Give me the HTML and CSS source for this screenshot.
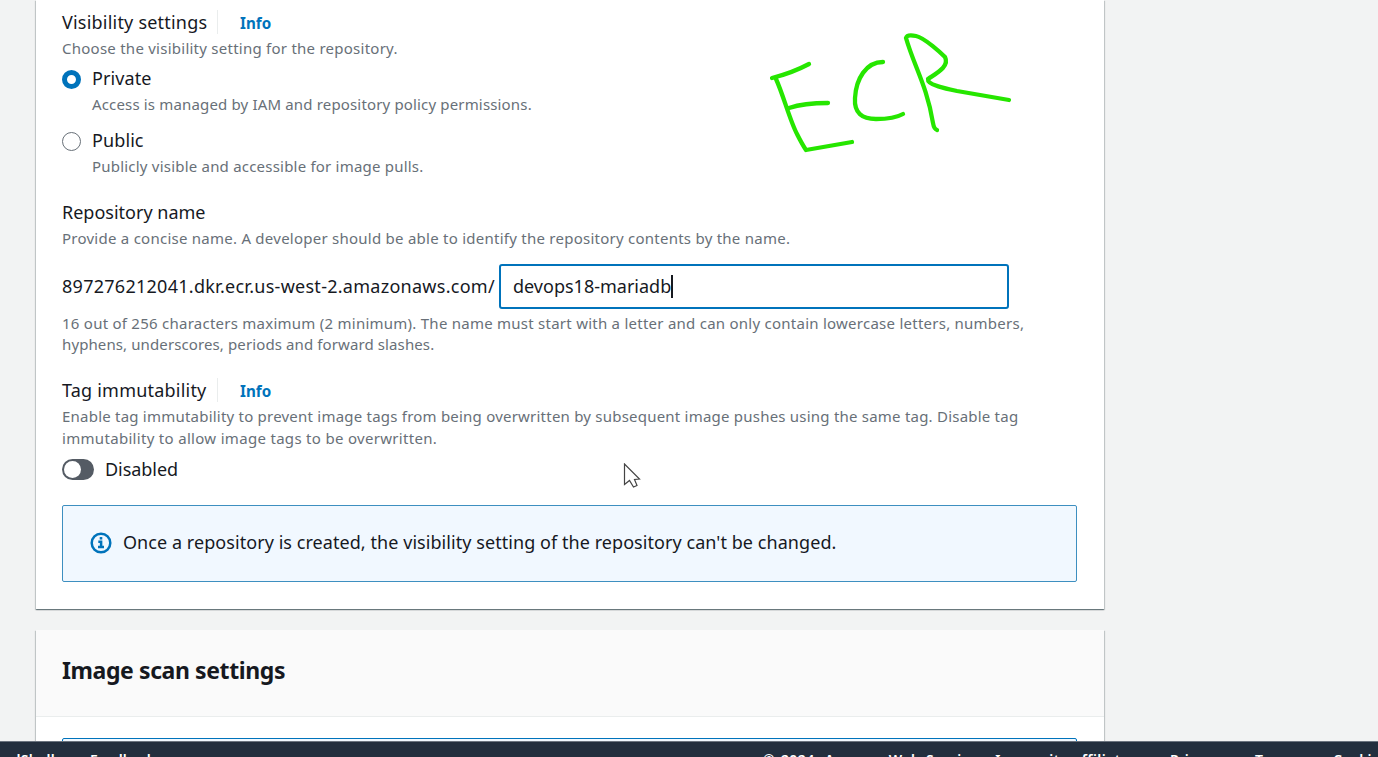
FILE: index.html
```html
<!DOCTYPE html>
<html lang="en">
<head>
<meta charset="utf-8">
<title>Create repository</title>
<link rel="stylesheet" href="styles.css">
</head>
<body>
<main class="content">
  <section class="card settings">
    <div class="field-title"><span class="label label-visibility">Visibility settings</span><a class="info">Info</a></div>
    <p class="hint h-choose">Choose the visibility setting for the repository.</p>
    <div class="option option-first">
      <span class="radio radio-on"></span>
      <div><div class="option-label">Private</div><p class="hint option-hint h-access">Access is managed by IAM and repository policy permissions.</p></div>
    </div>
    <div class="option">
      <span class="radio"></span>
      <div><div class="option-label">Public</div><p class="hint option-hint h-public">Publicly visible and accessible for image pulls.</p></div>
    </div>
    <div class="field-title title-repo"><span class="label-plain">Repository name</span></div>
    <p class="hint h-provide">Provide a concise name. A developer should be able to identify the repository contents by the name.</p>
    <div class="name-row">
      <span class="prefix">897276212041.dkr.ecr.us-west-2.amazonaws.com/</span>
      <div class="name-input"><span>devops18-mariadb</span><i class="caret"></i></div>
    </div>
    <p class="hint name-hint">16 out of 256 characters maximum (2 minimum). The name must start with a letter and can only contain lowercase letters, numbers,<br><span class="h-hyphens">hyphens, underscores, periods and forward slashes.</span></p>
    <div class="field-title title-tag"><span class="label label-tag">Tag immutability</span><a class="info">Info</a></div>
    <p class="hint tag-hint">Enable tag immutability to prevent image tags from being overwritten by subsequent image pushes using the same tag. Disable tag<br><span class="h-immut">immutability to allow image tags to be overwritten.</span></p>
    <div class="toggle-row"><span class="toggle"></span><span class="toggle-label">Disabled</span></div>
    <div class="alert">
      <svg class="info-icon" width="22" height="22" viewBox="0 0 22 22"><circle cx="11" cy="11" r="9.3"/><path d="M8.3 9.7h2.8v5.2M8 15.1h6"/><path d="M9.7 6.3h2.6"/></svg>
      <span class="alert-text">Once a repository is created, the visibility setting of the repository can't be changed.</span>
    </div>
  </section>
  <section class="card scan">
    <header class="card-header"><h2>Image scan settings</h2></header>
    <div class="scan-body"><div class="scan-alert"></div></div>
  </section>
</main>
<footer class="footer">
  <div class="footer-left"><span class="cloudshell">CloudShell</span><span>Feedback</span></div>
  <div class="footer-right"><span class="copyright">© 2024, Amazon Web Services, Inc. or its affiliates.</span><span class="privacy">Privacy</span><span class="terms">Terms</span><span>Cookie preferences</span></div>
</footer>
<svg class="ink" width="260" height="140" viewBox="760 25 260 140">
  <path d="M809 64Q792 73 772 78M776 79C783 94 790 121 797 134Q802 144 806 150L852 142M789 108Q804 103 828 103"/>
  <path d="M883 62C866 62 856 79 855 98C854 113 862 119 876 119C889 119 896 118 903 114"/>
  <path d="M937 130Q934 129 933 123C927 86 914 66 906 38Q907 34 916 36C925 38 942 54 945 57C950 67 935 74 928 79C927 85 947 89 957 91L1009 100"/>
</svg>
<svg class="pointer" width="18" height="28" viewBox="0 0 18 28"><path d="M1.5 1v20.500l5-4 4 6.500 3.500-1.500-2.500-6 5-.5z"/></svg>
</body>
</html>
```
FILE: styles.css
```css
* { box-sizing: border-box; }
body {
  margin: 0;
  height: 757px;
  overflow: hidden;
  position: relative;
  display: flex;
  flex-direction: column;
  background: #f2f3f3;
  color: #16191f;
  font: 18px/26px "Noto Sans", "Open Sans", sans-serif;
}
p, h2 { margin: 0; }
.content { flex: 1; min-height: 0; overflow: hidden; padding: 0 274px 0 35.5px; }
.card {
  background: #fff;
  box-shadow: 0 1px 1px rgba(0, 28, 36, .4), 1px 1px 1px rgba(0, 28, 36, .15), -1px 1px 1px rgba(0, 28, 36, .15);
}
.settings { height: 609px; padding: 8px 27px 27px 26.5px; }
.field-title { display: flex; align-items: center; height: 28px; }
.label {
  height: 24px;
  line-height: 24px;
  width: 156px;
  border-right: 1px solid #eaeded;
  letter-spacing: .21px;
  white-space: nowrap;
}
.info { margin-left: 22px; padding-top: 1px; color: #0073bb; font-size: 15.2px; font-weight: 700; }
.hint { color: #687078; font-size: 15px; line-height: 21.3px; letter-spacing: .25px; white-space: nowrap; margin-top: 2px; }
.option { display: flex; gap: 11px; margin-top: 12px; }
.option-first { margin-top: 6px; }
.option-label { letter-spacing: .1px; }
.option-hint { margin-top: 2px; padding-top: .5px; }
.h-access { letter-spacing: .16px; }
.h-public { letter-spacing: .21px; }
.h-hyphens { letter-spacing: .11px; }
.h-immut { letter-spacing: .31px; }
.radio { width: 19px; height: 19px; margin-top: 4.500px; border: 1.500px solid #687078; border-radius: 50%; }
.radio-on { border: 5.500px solid #0073bb; }
.title-repo { margin-top: 21px; }
.name-row { display: flex; align-items: center; margin-top: 15px; }
.prefix { width: 437px; padding-bottom: 2px; letter-spacing: .27px; white-space: nowrap; }
.name-input {
  display: flex;
  align-items: center;
  width: 510px;
  height: 45px;
  padding: 0 0 1px 12px;
  border: 2px solid #0073bb;
  border-radius: 3px;
}
.caret { width: 2px; height: 23px; background: #16191f; }
.name-hint { margin-top: 4px; }
.title-tag { margin-top: 20.500px; }
.tag-hint { letter-spacing: .22px; }
.toggle-row { display: flex; align-items: center; gap: 11px; margin-top: 7px; }
.toggle { width: 32px; height: 21px; padding: 2px; border-radius: 11px; background: #545b64; }
.toggle::before { content: ""; display: block; width: 17px; height: 17px; border-radius: 50%; background: #fff; }
.toggle-label { padding-bottom: 1px; letter-spacing: -.05px; }
.alert {
  display: flex;
  align-items: center;
  gap: 11px;
  height: 77px;
  margin-top: 22px;
  padding-left: 27px;
  border: 1px solid #3d8fc0;
  border-radius: 2px;
  background: #f1f8ff;
  white-space: nowrap;
}
.alert-text { padding-bottom: 3px; letter-spacing: .06px; }
.info-icon { fill: none; stroke: #0073bb; stroke-width: 2.5; }
.scan { margin-top: 21px; height: 200px; }
.card-header { height: 87px; padding: 25px 26.5px; background: #fafafa; border-bottom: 1px solid #eaeded; }
h2 { font-size: 23px; line-height: 30px; font-weight: 700; letter-spacing: -.4px; white-space: nowrap; }
.scan-body { padding: 21px 27px 0 26.5px; }
.scan-alert { height: 77px; border: 1px solid #0073bb; border-radius: 2px; background: #f1f8ff; }
.footer {
  display: flex;
  justify-content: space-between;
  height: 16px;
  padding-top: 8px;
  overflow: hidden;
  border-top: 1px solid #6b747f;
  background: #232f3e;
  color: #fff;
  font-size: 14px;
  font-weight: 600;
  line-height: 20px;
  white-space: nowrap;
}
.footer-left { display: flex; gap: 35px; margin-left: -20px; }
.cloudshell { letter-spacing: .3px; }
.footer-right { display: flex; width: 615px; }
.copyright { width: 407px; flex: none; letter-spacing: .45px; word-spacing: 1.7px; }
.privacy { width: 85px; flex: none; }
.terms { width: 78px; flex: none; }
.ink { position: absolute; left: 760px; top: 25px; fill: none; stroke: #26e600; stroke-width: 4.3; stroke-linecap: round; stroke-linejoin: round; }
.pointer { position: absolute; left: 623px; top: 463px; fill: #fff; stroke: #444; stroke-width: 1.2; }
```
